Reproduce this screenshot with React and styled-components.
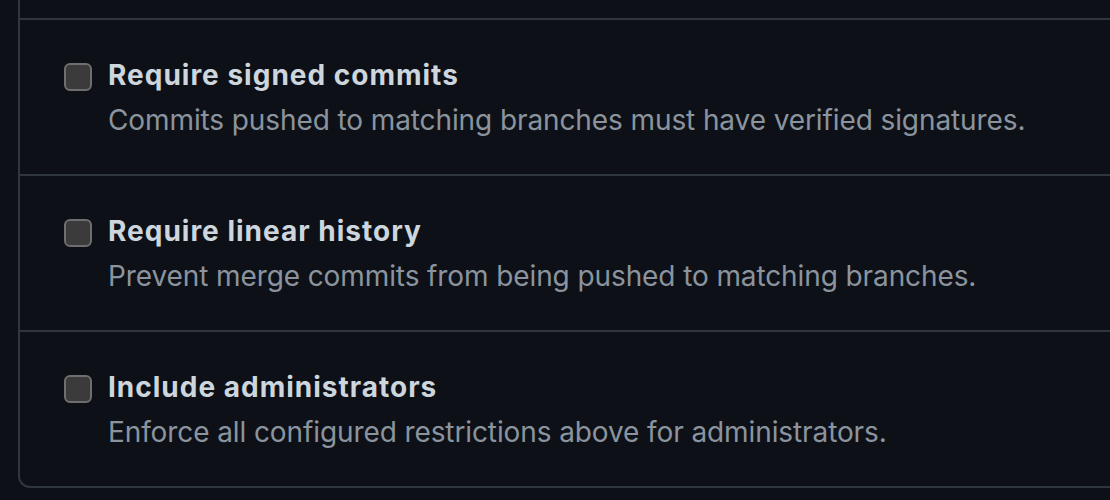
import React from 'react';
import styled, { createGlobalStyle } from 'styled-components';

const GlobalStyle = createGlobalStyle`
  html, body {
    margin: 0;
    padding: 0;
    background: #0d1117;
    overflow: hidden;
  }
  body {
    font-family: Inter, "Noto Sans", "Liberation Sans", sans-serif;
  }
`;

const rules = [
  {
    title: 'Require signed commits',
    note: 'Commits pushed to matching branches must have verified signatures.',
  },
  {
    title: 'Require linear history',
    note: 'Prevent merge commits from being pushed to matching branches.',
  },
  {
    title: 'Include administrators',
    note: 'Enforce all configured restrictions above for administrators.',
  },
];

const App = () => {
  return (
    <Page>
      <GlobalStyle />
      <RulesBox>
        <PrevRow />
        {rules.map((rule) => (
          <RuleRow key={rule.title}>
            <Checkbox type="checkbox" />
            <RuleText>
              <RuleTitle>{rule.title}</RuleTitle>
              <RuleNote>{rule.note}</RuleNote>
            </RuleText>
          </RuleRow>
        ))}
      </RulesBox>
    </Page>
  );
};

const Page = styled.div`
  width: 1110px;
  height: 500px;
  padding-left: 18px;
  box-sizing: border-box;
  background: #0d1117;
`;

const RulesBox = styled.div`
  width: 1140px;
  border: 2px solid #30363d;
  border-top: none;
  border-radius: 0 0 12px 12px;
  box-sizing: border-box;
`;

const PrevRow = styled.div`
  height: 18px;
  border-bottom: 2px solid #30363d;
`;

const RuleRow = styled.div`
  display: flex;
  align-items: flex-start;
  gap: 16px;
  padding: 35px 0 35px 44px;
  border-bottom: 2px solid #30363d;

  &:last-child {
    border-bottom: none;
  }
`;

const Checkbox = styled.input`
  appearance: none;
  margin: 8px 0 0 0;
  width: 28px;
  height: 28px;
  flex-shrink: 0;
  border: 2px solid #6e6e6e;
  border-radius: 6px;
  background: #3b3b3b;
  box-sizing: border-box;
`;

const RuleText = styled.div`
  display: flex;
  flex-direction: column;
  gap: 6px;
`;

const RuleTitle = styled.div`
  font-size: 28px;
  line-height: 40px;
  font-weight: 700;
  letter-spacing: 1px;
  color: #cdd5dd;
`;

const RuleNote = styled.div`
  font-size: 28px;
  line-height: 38px;
  letter-spacing: -0.1px;
  color: #8b949e;
`;

export default App;
